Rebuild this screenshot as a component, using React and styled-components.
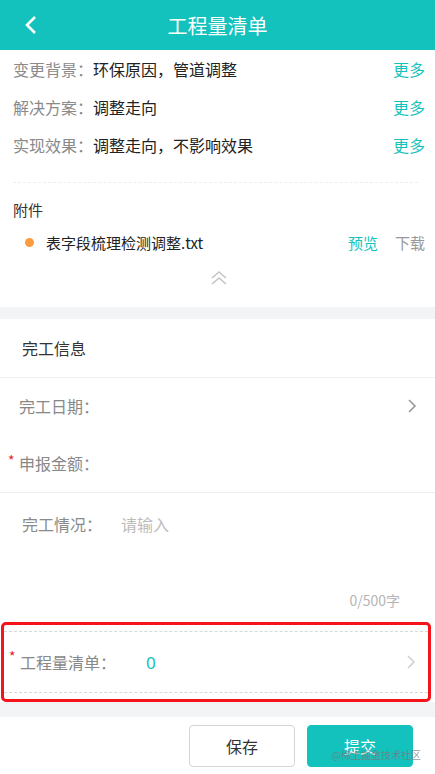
import React from "react"
import styled, { createGlobalStyle } from "styled-components"

const teal = "#13c2bd"

const GlobalStyle = createGlobalStyle`
  html, body {
    margin: 0;
    padding: 0;
    background: #fff;
    font-family: "Noto Sans CJK SC", "Noto Sans", sans-serif;
  }
  * { box-sizing: border-box; }
`

const Page = styled.div`
  width: 435px;
  height: 774px;
  overflow: hidden;
  display: flex;
  flex-direction: column;
  background: #fff;
`

const Header = styled.header`
  height: 50px;
  background: ${teal};
  display: flex;
  align-items: center;
  justify-content: center;
  position: relative;
  color: #fff;
  font-size: 20px;
  flex-shrink: 0;
`

const Back = styled.span`
  position: absolute;
  left: 24px;
  top: 15px;
  display: flex;
`

const InfoList = styled.div`
  padding: 0 10px 0 13px;
`

const InfoRow = styled.div`
  height: 38px;
  display: flex;
  align-items: center;
  font-size: 16px;
`

const Label = styled.span`
  color: #8a8a8a;
`

const Value = styled.span`
  color: #222;
  flex: 1;
`

const More = styled.span`
  color: ${teal};
`

const Dashed = styled.div`
  margin: 18px 7px 0 0;
  border-top: 1px dashed #eceef0;
`

const Attach = styled.div`
  padding: 15px 10px 0 13px;
  height: 124px;
`

const AttachTitle = styled.div`
  font-size: 15px;
  color: #333;
  line-height: 24px;
`

const FileRow = styled.div`
  display: flex;
  align-items: center;
  height: 34px;
  margin-top: 3px;
  font-size: 15px;
`

const Dot = styled.span`
  width: 9px;
  height: 9px;
  border-radius: 50%;
  background: #fb9c3e;
  margin: 0 12px 0 12px;
`

const FileName = styled.span`
  color: #222;
  flex: 1;
`

const Action = styled.span`
  color: ${(p) => (p.$primary ? teal : "#999")};
  margin-left: 17px;
`

const Collapse = styled.div`
  display: flex;
  justify-content: center;
  padding-top: 11px;
`

const Gap = styled.div`
  height: ${(p) => p.$h}px;
  background: #f2f4f6;
  flex-shrink: 0;
`

const SectionTitle = styled.div`
  height: 59px;
  display: flex;
  align-items: center;
  padding-left: 22px;
  font-size: 16px;
  color: #333;
  border-bottom: 1px solid #f0f0f0;
`

const FormRow = styled.div`
  height: ${(p) => p.$h || 57}px;
  display: flex;
  align-items: center;
  padding: 0 18px 0 8px;
  font-size: 16px;
  border-bottom: ${(p) => (p.$line ? "1px solid #eeeeee" : "none")};
`

const Star = styled.span`
  width: 11px;
  color: #e5262b;
  font-size: 14px;
  align-self: flex-start;
  margin-top: ${(p) => p.$top || 18}px;
`

const FormLabel = styled.span`
  color: #888;
  width: ${(p) => p.$w}px;
`

const FormValue = styled.span`
  flex: 1;
  color: ${teal};
  font-size: 17px;
  font-family: "Noto Sans", sans-serif;
`

const ChevronBox = styled.span`
  margin-left: auto;
  display: flex;
`

const TextArea = styled.div`
  height: 129px;
  padding: 19px 35px 0 22px;
  position: relative;
  font-size: 16px;
`

const AreaTop = styled.div`
  display: flex;
`

const Placeholder = styled.span`
  color: #bcbcbc;
  margin-left: 19px;
`

const Counter = styled.div`
  position: absolute;
  right: 35px;
  bottom: 12px;
  color: #b5b5b5;
  font-size: 14px;
`

const Marked = styled.div`
  border: 3px solid #f5141a;
  border-radius: 5px;
  margin: 0 4px 0 1px;
  padding: 6px 0;
  height: 80px;
`

const MarkedInner = styled.div`
  border-top: 1px dashed #d6d8da;
  border-bottom: 1px dashed #d6d8da;
  height: 62px;
  display: flex;
  align-items: center;
  padding: 0 12px 0 5px;
  font-size: 16px;
`

const Footer = styled.div`
  flex: 1;
  display: flex;
  justify-content: flex-end;
  gap: 12px;
  padding: 8px 22px 0 0;
  position: relative;
`

const Button = styled.button`
  width: 106px;
  height: 42px;
  border-radius: 4px;
  font-size: 16px;
  font-family: "Noto Sans CJK SC", sans-serif;
  border: 1px solid ${(p) => (p.$primary ? teal : "#d4d4d4")};
  background: ${(p) => (p.$primary ? teal : "#fff")};
  color: ${(p) => (p.$primary ? "#fff" : "#333")};
`

const Watermark = styled.span`
  position: absolute;
  right: 14px;
  bottom: 12px;
  font-size: 10px;
  color: rgba(120, 120, 120, 0.75);
`

const Chevron = ({ color = "#999" }) => (
  <ChevronBox>
    <svg width="10" height="16" viewBox="0 0 10 16">
      <path d="M2 2 L8 8 L2 14" fill="none" stroke={color} strokeWidth="1.6" />
    </svg>
  </ChevronBox>
)

const infos = [
  ["变更背景：", "环保原因，管道调整"],
  ["解决方案：", "调整走向"],
  ["实现效果：", "调整走向，不影响效果"],
]

export default function App() {
  return (
    <Page>
      <GlobalStyle />
      <Header>
        <Back>
          <svg width="14" height="20" viewBox="0 0 14 20">
            <path d="M11 2 L3 10 L11 18" fill="none" stroke="#fff" strokeWidth="2.6" />
          </svg>
        </Back>
        工程量清单
      </Header>
      <InfoList>
        {infos.map(([l, v]) => (
          <InfoRow key={l}>
            <Label>{l}</Label>
            <Value>{v}</Value>
            <More>更多</More>
          </InfoRow>
        ))}
        <Dashed />
      </InfoList>
      <Attach>
        <AttachTitle>附件</AttachTitle>
        <FileRow>
          <Dot />
          <FileName>表字段梳理检测调整.txt</FileName>
          <Action $primary>预览</Action>
          <Action>下载</Action>
        </FileRow>
        <Collapse>
          <svg width="18" height="16" viewBox="0 0 18 16">
            <path d="M2 8 L9 2 L16 8 M2 14 L9 8 L16 14" fill="none" stroke="#c4c4c4" strokeWidth="1.6" />
          </svg>
        </Collapse>
      </Attach>
      <Gap $h={12} />
      <SectionTitle>完工信息</SectionTitle>
      <FormRow $h={56}>
        <Star />
        <FormLabel $w={120}>完工日期：</FormLabel>
        <Chevron />
      </FormRow>
      <FormRow $h={59} $line>
        <Star $top={16}>*</Star>
        <FormLabel $w={120}>申报金额：</FormLabel>
      </FormRow>
      <TextArea>
        <AreaTop>
          <Label>完工情况：</Label>
          <Placeholder>请输入</Placeholder>
        </AreaTop>
        <Counter>0/500字</Counter>
      </TextArea>
      <Marked>
        <MarkedInner>
          <Star $top={14}>*</Star>
          <FormLabel $w={126}>工程量清单：</FormLabel>
          <FormValue>0</FormValue>
          <Chevron color="#d0d0d0" />
        </MarkedInner>
      </Marked>
      <Gap $h={15} />
      <Footer>
        <Button>保存</Button>
        <Button $primary>提交</Button>
        <Watermark>@稀土掘金技术社区</Watermark>
      </Footer>
    </Page>
  )
}
